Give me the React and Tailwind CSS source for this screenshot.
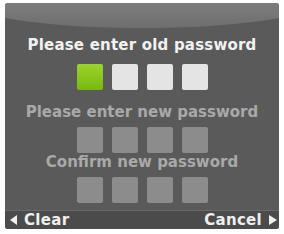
export default function App() {
  const font = { fontFamily: '"DejaVu Sans", "Liberation Sans", sans-serif' };
  return (
    <div className="w-[284px] h-[234px] bg-white pt-[3px] pb-[5px] px-[5px]" style={font}>
      <div className="relative h-full w-full overflow-hidden rounded-[3px] bg-[#5a5a5a] flex flex-col">
        {/* top glossy header */}
        <div className="absolute -left-[40px] -right-[40px] -top-[30px] h-[55px] rounded-b-[50%] bg-gradient-to-b from-[#909090] to-[#6e6e6e]" />
        <div className="relative h-[27px]" />
        <div className="relative flex-1 flex flex-col items-center">
          <div className="mt-[6px] text-[15px] leading-[18px] font-bold tracking-[0.2px] text-[#f2f2f2]">
            Please enter old password
          </div>
          <div className="mt-[10px] flex gap-[9px]">
            <div className="w-[26px] h-[26px] rounded-[2px] bg-gradient-to-b from-[#9bd42a] to-[#79b80e]" />
            <div className="w-[26px] h-[26px] rounded-[2px] bg-[#e4e4e4]" />
            <div className="w-[26px] h-[26px] rounded-[2px] bg-[#e4e4e4]" />
            <div className="w-[26px] h-[26px] rounded-[2px] bg-[#e4e4e4]" />
          </div>
          <div className="mt-[13px] text-[15px] leading-[18px] font-bold text-[#a9a9a9]">
            Please enter new password
          </div>
          <div className="mt-[6px] flex gap-[9px]">
            <div className="w-[26px] h-[26px] rounded-[2px] bg-[#8c8c8c]" />
            <div className="w-[26px] h-[26px] rounded-[2px] bg-[#8c8c8c]" />
            <div className="w-[26px] h-[26px] rounded-[2px] bg-[#8c8c8c]" />
            <div className="w-[26px] h-[26px] rounded-[2px] bg-[#8c8c8c]" />
          </div>
          <div className="mt-0 text-[15px] leading-[18px] font-bold text-[#a9a9a9]">
            Confirm new password
          </div>
          <div className="mt-[6px] flex gap-[9px]">
            <div className="w-[26px] h-[26px] rounded-[2px] bg-[#8c8c8c]" />
            <div className="w-[26px] h-[26px] rounded-[2px] bg-[#8c8c8c]" />
            <div className="w-[26px] h-[26px] rounded-[2px] bg-[#8c8c8c]" />
            <div className="w-[26px] h-[26px] rounded-[2px] bg-[#8c8c8c]" />
          </div>
        </div>
        <div className="relative h-[19px] border-t border-[#6a6a6a] bg-[#4b4b4b] flex items-center justify-between pl-[5px] pr-[2px] text-[15px] font-bold text-[#f0f0f0] tracking-[0.3px]">
          <div className="flex items-center gap-[7px]">
            <span className="w-0 h-0 border-y-[5px] border-y-transparent border-r-[7px] border-r-[#f0f0f0]" />
            <span>Clear</span>
          </div>
          <div className="flex items-center gap-[7px]">
            <span>Cancel</span>
            <span className="w-0 h-0 border-y-[5px] border-y-transparent border-l-[8px] border-l-[#f0f0f0]" />
          </div>
        </div>
      </div>
    </div>
  );
}
